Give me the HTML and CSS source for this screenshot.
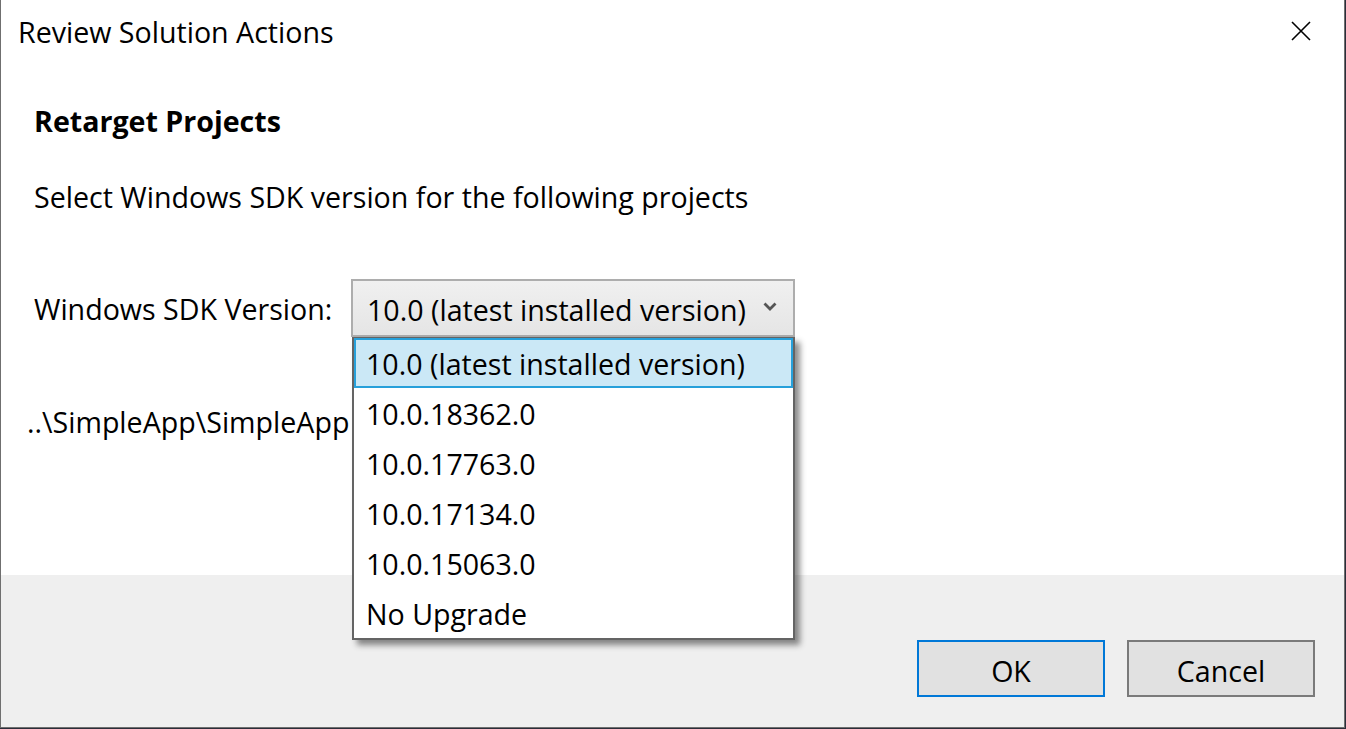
FILE: index.html
```html
<!DOCTYPE html>
<html lang="en">
<head>
<meta charset="utf-8">
<title>Review Solution Actions</title>
<link rel="stylesheet" href="styles.css">
</head>
<body>
<div class="dialog">
  <div class="titlebar">
    <span class="title">Review Solution Actions</span>
    <button class="close" aria-label="Close">
      <svg width="20" height="20" viewBox="0 0 20 20"><path d="M1 1L19 19M19 1L1 19" stroke="#000" stroke-width="1.6" fill="none"/></svg>
    </button>
  </div>
  <div class="content">
    <h1 class="heading">Retarget Projects</h1>
    <p class="intro">Select Windows SDK version for the following projects</p>
    <div class="sdk-row">
      <span class="sdk-label">Windows SDK Version:</span>
      <div class="combo-wrap">
        <div class="combo">
          <span class="combo-text">10.0 (latest installed version)</span>
          <svg class="chevron" width="14" height="9" viewBox="0 0 14 9"><path d="M1.5 1.5L7 7L12.5 1.5" stroke="#555" stroke-width="2.8" fill="none"/></svg>
        </div>
        <ul class="list">
          <li class="item selected">10.0 (latest installed version)</li>
          <li class="item">10.0.18362.0</li>
          <li class="item">10.0.17763.0</li>
          <li class="item">10.0.17134.0</li>
          <li class="item">10.0.15063.0</li>
          <li class="item">No Upgrade</li>
        </ul>
      </div>
    </div>
    <div class="project-row">..\SimpleApp\SimpleApp</div>
  </div>
  <div class="footer">
    <button class="btn btn-default">OK</button>
    <button class="btn">Cancel</button>
  </div>
</div>
</body>
</html>
```

FILE: styles.css
```css
html, body {
  margin: 0;
  padding: 0;
}
body {
  background: #2b2d3a;
  width: 1346px;
  height: 729px;
  overflow: hidden;
  font-family: "Open Sans", "Noto Sans", sans-serif;
  font-size: 28.6px;
  color: #000;
}
.dialog {
  box-sizing: border-box;
  width: 1345px;
  height: 728px;
  border-left: 1px solid #6f6f6f;
  border-right: 1px solid #6f6f6f;
  border-bottom: 1px solid #6f6f6f;
  background: #fff;
  display: flex;
  flex-direction: column;
}
.titlebar {
  height: 64px;
  display: flex;
  align-items: center;
  justify-content: space-between;
  padding-left: 17px;
  padding-right: 33px;
}
.title {
  font-size: 28.6px;
  line-height: 62px;
}
.close {
  border: 0;
  background: none;
  padding: 0;
  width: 20px;
  height: 20px;
  display: flex;
  margin-top: -2px;
}
.content {
  flex: 1;
  padding-left: 33px;
}
.heading {
  margin: 37px 0 0 0;
  font-size: 28.6px;
  font-weight: 700;
  line-height: 40px;
}
.intro {
  margin: 36px 0 0 0;
  line-height: 40px;
}
.sdk-row {
  margin-top: 62px;
  display: flex;
  align-items: center;
  height: 58px;
}
.sdk-label {
  width: 317px;
  line-height: 40px;
  padding-top: 2px;
}
.combo-wrap {
  position: relative;
}
.combo {
  box-sizing: border-box;
  width: 444px;
  height: 58px;
  border: 2px solid #adadad;
  background: linear-gradient(#f0f0f0, #e5e5e5);
  display: flex;
  align-items: center;
  justify-content: space-between;
  padding: 3px 16px 0 14px;
}
.combo-text {
  line-height: 40px;
}
.chevron {
  margin-top: -7px;
}
.list {
  position: absolute;
  left: 1px;
  top: 58px;
  box-sizing: border-box;
  width: 443px;
  margin: 0;
  padding: 0;
  list-style: none;
  background: #fff;
  border: 2px solid #646464;
  border-top-width: 1px;
  box-shadow: 5px 5px 6px rgba(0, 0, 0, 0.45);
  z-index: 2;
}
.item {
  box-sizing: border-box;
  height: 50px;
  line-height: 42px;
  padding: 3px 0 0 10px;
  border: 2px solid transparent;
}
.item.selected {
  background: #cbe8f6;
  border-color: #26a0da;
}
.project-row {
  margin-top: 65px;
  margin-left: -7px;
  line-height: 40px;
  white-space: nowrap;
}
.footer {
  height: 152px;
  background: #efefef;
  display: flex;
  justify-content: flex-end;
  align-items: flex-start;
  gap: 22px;
  padding: 65px 29px 0 0;
  box-sizing: border-box;
}
.btn {
  box-sizing: border-box;
  width: 188px;
  height: 57px;
  background: #e1e1e1;
  border: 2px solid #7a7a7a;
  font-family: inherit;
  font-size: 28.6px;
  color: #000;
  padding: 3px 0 0 0;
}
.btn-default {
  border-color: #0078d7;
}
```
